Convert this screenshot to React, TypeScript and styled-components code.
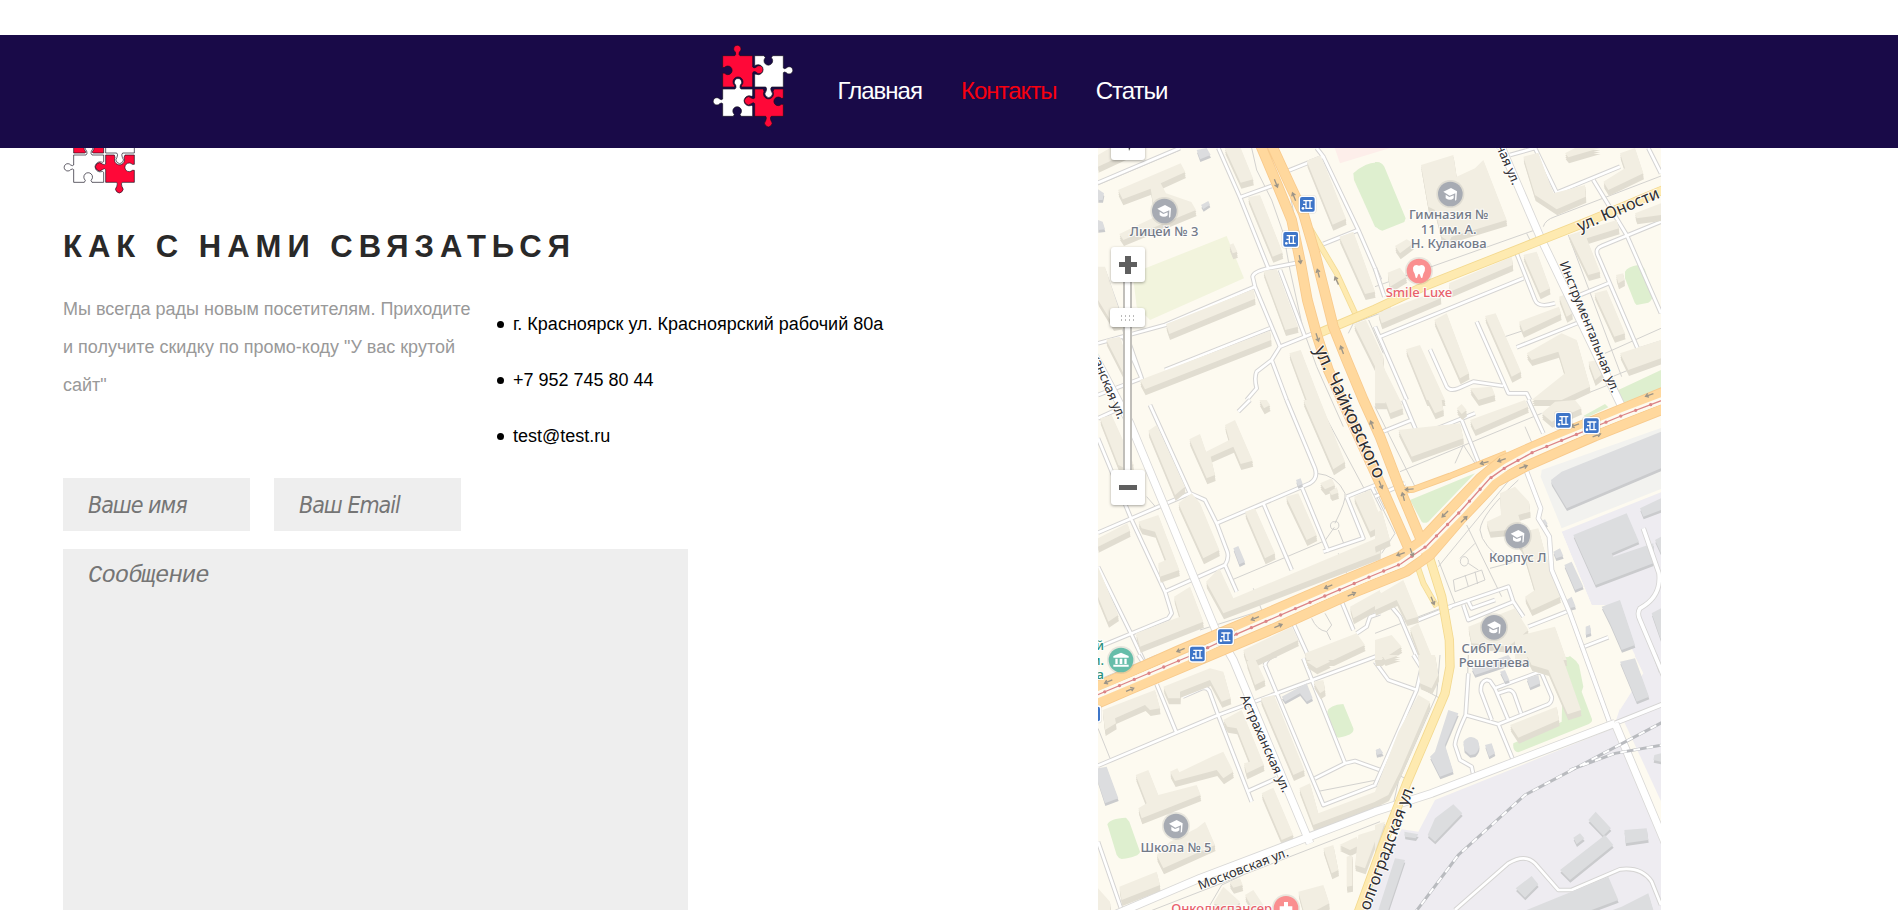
import React, { useState } from 'react';
import styled, { createGlobalStyle } from 'styled-components';

const GlobalStyle = createGlobalStyle`
  *, *::before, *::after { box-sizing: border-box; }
  body {
    margin: 0;
    background: #fff;
    font-family: Arial, "Liberation Sans", sans-serif;
  }
`;

const Page = styled.div`
  height: 100vh;
  overflow: hidden;
`;

const Header = styled.header`
  position: fixed;
  top: 35px;
  left: 0;
  right: 0;
  z-index: 10;
  height: 113px;
  display: flex;
  justify-content: center;
  gap: 44px;
  padding: 9px 19px 0 0;
  background: #190a48;
`;

const Nav = styled.nav`
  display: flex;
  align-items: center;
  gap: 39px;
  height: 94px;
`;

const NavLink = styled.a<{ $active?: boolean }>`
  font-size: 24px;
  line-height: 28px;
  letter-spacing: -1px;
  text-decoration: none;
  color: ${(p) => (p.$active ? '#f8000f' : '#fff')};
`;

const Main = styled.main`
  display: grid;
  grid-template-columns: 1035fr 563fr;
  padding: 110px 237px 0 63px;
`;

const Info = styled.section`
  display: flex;
  flex-direction: column;
  align-items: flex-start;
`;

const Title = styled.h1`
  margin: 34px 0 0;
  font-size: 31px;
  line-height: 38px;
  letter-spacing: 6px;
  text-transform: uppercase;
  color: #292929;
`;

const Contacts = styled.div`
  display: flex;
  gap: 22px;
  margin-top: 24px;
`;

const Lead = styled.p`
  width: 412px;
  margin: 0;
  font-size: 18px;
  line-height: 38px;
  color: #999;
`;

const ContactList = styled.ul`
  display: flex;
  flex-direction: column;
  gap: 18px;
  margin: 0;
  padding: 15px 0 0;
  list-style: none;
  font-size: 18px;
  line-height: 38px;
  color: #000;
`;

const ContactItem = styled.li`
  display: flex;
  align-items: center;
  gap: 9px;
  &::before {
    content: "";
    width: 7px;
    height: 7px;
    border-radius: 50%;
    background: #000;
  }
`;

const Form = styled.form`
  display: flex;
  flex-direction: column;
  gap: 18px;
  width: 625px;
  margin-top: 23px;
`;

const FieldRow = styled.div`
  display: flex;
  gap: 24px;
`;

const Field = styled.input`
  width: 187px;
  height: 53px;
  padding: 0 25px;
  border: 0;
  border-radius: 0;
  outline: 0;
  background: #eee;
  font-family: "DejaVu Sans Condensed", "DejaVu Sans", sans-serif;
  font-size: 23px;
  font-style: italic;
  letter-spacing: -1px;
  &::placeholder { color: #757575; opacity: 1; }
`;

const Message = styled.textarea`
  width: 100%;
  height: 500px;
  padding: 13px 25px;
  border: 0;
  border-radius: 0;
  outline: 0;
  resize: none;
  background: #eee;
  font-family: "Liberation Mono", "Courier New", monospace;
  font-size: 24px;
  line-height: 27px;
  font-style: italic;
  letter-spacing: -1px;
  &::placeholder { color: #757575; opacity: 1; }
`;

const MapPanel = styled.section`
  position: relative;
  height: 840px;
  padding-top: 34px;
  overflow: hidden;
`;

const MapCanvas = styled.svg`
  display: block;
  width: 100%;
  height: 766px;
  font-family: "Noto Sans", sans-serif;
`;

const Controls = styled.div`
  position: absolute;
  top: 15px;
  left: 12px;
  display: flex;
  flex-direction: column;
  align-items: center;
`;

const MapButton = styled.button`
  position: relative;
  z-index: 1;
  display: flex;
  align-items: center;
  justify-content: center;
  width: 34px;
  height: 35px;
  padding: 0;
  border: 0;
  border-radius: 3px;
  background: #fff;
  box-shadow: 0 1px 3px rgba(0, 0, 0, 0.35);
`;

const LocateButton = styled(MapButton)`
  margin-bottom: 87px;
`;

const ZoomRange = styled.input`
  appearance: none;
  writing-mode: vertical-lr;
  direction: rtl;
  width: 35px;
  height: 188px;
  margin: 0;
  background: transparent;
  &::-webkit-slider-runnable-track {
    width: 9px;
    border: 2px solid #c1bfba;
    border-width: 0 2px;
    background: #fff;
  }
  &::-webkit-slider-thumb {
    appearance: none;
    width: 35px;
    height: 19px;
    margin-left: -15px;
    border-radius: 3px;
    background: #fff;
    box-shadow: 0 1px 3px rgba(0, 0, 0, 0.35);
  }
`;

const ZoomTrack = styled.div`
  position: relative;
  display: flex;
`;

const Grip = styled.svg`
  position: absolute;
  top: 33px;
  left: 11px;
  pointer-events: none;
`;

function Logo() {
  return (
    <svg width="82" height="84" viewBox="35 27 246 252" role="img" aria-label="Логотип">
      <g stroke="#15101f" strokeWidth="2" strokeLinejoin="round">
        <path fill="#ff0838" d="M67 62H103Q108 60 105 51A11 11 0 1 1 117 51Q114 60 119 62H157V96Q160 101 167 97A12 12 0 1 1 167 111Q160 107 157 113V156H126Q120 154 124 151A15 15 0 1 0 102 151Q106 154 100 156H67V114L73 115A13 13 0 1 0 73 97L67 98Z" />
        <path fill="#fff" d="M163 62H191L195 68A13 13 0 1 0 213 68L217 62H249V99Q252 103 258 99A11 11 0 1 1 258 113Q252 109 249 113V156H214Q209 160 213 169A11 11 0 1 1 197 169Q201 160 196 156H163V117L168 118A15 15 0 1 0 168 90L163 92Z" />
        <path fill="#fff" d="M67 162H104Q109 158 106 150A11 11 0 1 1 120 150Q117 158 122 162H157V182L153 184A15 15 0 1 0 153 211L157 214V244H122L119 238A13 13 0 1 0 102 238L99 244H67V206Q64 202 58 206A11 11 0 1 1 58 192Q64 196 67 192Z" />
        <path fill="#ff0838" d="M163 162H189L191 170A15 15 0 1 0 218 170L221 162H249V190L243 190A13 13 0 1 0 243 208L249 208V244H213Q208 247 212 257A11 11 0 1 1 196 257Q200 247 196 244H163V206Q160 200 153 206A12 12 0 1 1 153 189Q160 193 163 189Z" />
      </g>
    </svg>
  );
}

/* The map is drawn in tiles; every tile has its own origin and lists its blocks. */
type Tile = {
  x: number;
  y: number;
  greens: string[];
  paths: string[];
  roads: string[];
  buildings: string[];
  grey: string[];
};

const tiles: Tile[] = [
  {
    x: 0,
    y: 0,
    greens: ['M870 68Q830 62 790 100L792 120L855 260L870 268Z'],
    paths: ['M485 24L500 90L545 180L580 280L600 390L640 570L680 680L760 860', 'M615 240L600 160L560 24', 'M0 145L270 30', 'M870 520L790 550L775 580', 'M836 540L880 640'],
    roads: ['M24 128L270 24', 'M385 24L450 172L535 385', 'M450 172L545 138', 'M595 92L700 50L680 24', 'M700 50L805 270L870 420', 'M805 270L700 312', 'M535 385L625 368', 'M535 385Q490 395 488 410L495 440L570 620L545 660L500 695Q492 712 500 745L470 780', 'M495 440L225 555L24 610', 'M40 390L155 715L24 765', 'M155 715L100 590', 'M545 660L590 780', 'M570 620L670 580', 'M570 390L645 590', 'M540 565L225 690'],
    buildings: ['M404 24L452 24L490 118L452 128Z', 'M84 150L272 70L286 96L212 130L228 160L304 186L318 210L100 300L88 282L196 230L182 146L98 178Z', 'M474 172L510 165L578 338L548 350Z', 'M650 62L692 46L768 236L728 254Z', 'M748 290L790 275L855 455L825 462Z', 'M520 392L560 388L624 560L586 570Z', 'M228 552L490 448L495 476L238 582Z', 'M150 720L540 572L543 600L165 748Z', 'M24 380L45 380L100 550L70 555L24 480Z', 'M48 598L90 590L122 690L100 700Z', 'M792 552L828 540L880 650L880 730Z', 'M598 640L632 630L690 780L650 780Z', 'M24 45L60 24L145 24L24 80Z', 'M418 315L430 310L442 335L428 340Z', 'M866 500L900 490L900 530Z'],
    grey: ['M320 30L350 24L362 45L330 58Z', 'M333 195L355 183L360 194L340 207Z', 'M24 148L42 160L38 180L24 180Z', 'M24 240L38 245L45 268L24 270Z'],
  },
  {
    x: 855,
    y: 0,
    greens: ['M0 66Q20 64 28 80L92 235L88 246L22 272Q10 270 0 255Z', 'M750 395Q758 380 790 375Q808 378 812 395L833 460Q835 480 820 488L785 495Q778 490 775 478L750 415Z', 'M730 750L858 690L858 745L740 795Z'],
    paths: ['M0 440L480 270', 'M505 260Q510 240 540 230L858 108', 'M455 280L470 310', 'M580 285L740 710', 'M690 640L858 565', 'M390 590L450 570', 'M700 715L858 650', 'M560 790L700 735'],
    roads: ['M405 45L480 24L545 158L735 80', 'M655 120L755 285L858 520', 'M820 24L858 100', 'M858 245L680 318Q660 325 668 345L790 630L858 608', 'M700 430L615 465', 'M425 340L480 480Q490 505 540 490', 'M15 590L445 415', 'M0 560L95 780', 'M0 385L28 470', 'M165 628L215 740Q225 755 250 745L295 725L385 738', 'M305 545L400 760L455 760L465 780', 'M425 622L610 548'],
    buildings: ['M138 75L235 45L245 110L300 85L325 60L395 240L230 290L222 305L200 290L180 210L160 200Z', 'M445 50L490 38L535 160L630 135L632 170L545 208L480 165Z', 'M570 40L600 24L675 24L580 52Z', 'M735 40L780 24L805 100L700 150L685 125L750 85Z', 'M582 285L725 240L732 265L635 295L675 395L640 405Z', 'M445 345L485 335L525 445L495 460Z', 'M222 430L410 350L413 375L225 455Z', 'M10 518L195 450L197 475L20 550Z', 'M178 540L215 520L282 700L255 715Z', 'M330 528L362 520L438 695L410 710Z', 'M93 628L135 615L210 780L155 780Z', 'M0 600L30 690L80 790L0 790Z', 'M432 545L552 500L558 522L445 575Z', 'M455 640L560 580L605 600L645 740L560 780L470 780L570 700L550 635L470 660Z', 'M658 460L695 450L750 580L718 590Z', 'M735 640L858 600L858 655L760 690Z', 'M780 220L858 190L858 225L785 235Z', 'M60 318L95 298L115 310L75 340Z', 'M38 398L75 383L95 410L45 440Z', 'M552 470L575 462L592 520L575 530Z', 'M640 665L670 660L685 700L660 720Z', 'M723 405L745 400L748 420L730 430Z', 'M285 745L350 740L360 765L310 780Z'],
    grey: [],
  },
  {
    x: 0,
    y: 780,
    greens: [],
    paths: ['M680 0L830 280', 'M680 220Q740 225 765 280Q770 300 735 370', 'M425 540L705 422L733 382', 'M733 365A10 12 0 1 0 735 388A10 12 0 1 0 733 365', 'M745 390L765 440', 'M665 655Q680 690 710 695L725 675L705 640', 'M710 695L722 720', 'M170 290L205 330', 'M490 565L515 630', 'M745 460L770 520', 'M330 690L520 630L870 490'],
    roads: ['M180 15L300 280L24 398', 'M24 115L125 360L225 575L245 640L235 655L24 742', 'M225 575L405 495', 'M300 280L345 300L380 370L412 455Q418 475 405 495L440 575', 'M380 370L660 250Q685 235 675 205L590 0', 'M520 310L605 510', 'M635 260L715 455', 'M770 290L870 250', 'M770 290L820 415L700 455', 'M445 35L480 0', 'M24 500L125 705L160 780', 'M610 670L660 780', 'M755 605L790 690', 'M870 640L840 650L830 680L800 700', 'M24 55L100 20', 'M845 260L880 330'],
    buildings: ['M30 55L65 45L130 190L115 210L85 195Z', 'M640 0L690 0L765 185L730 208Z', 'M175 92L200 75L285 260L255 285Z', 'M298 118L330 102L348 155L418 120L405 75L435 60L488 182L452 192L430 140L362 170L375 225L350 235Z', 'M265 310L305 280L330 310L388 450L340 475Z', 'M465 335L495 325L555 460L525 475Z', 'M588 290L625 280L680 405L650 420Z', 'M24 415L112 370L120 392L24 440Z', 'M145 365L205 345L268 510L210 530L205 490L228 480L195 395L155 385Z', 'M24 500L85 645L55 665L24 590Z', 'M252 590L300 560L340 665L150 740L138 700L270 650Z', 'M348 545L388 505L430 595L870 410L870 460L400 640Z', 'M690 250L725 235L735 255L705 268Z', 'M718 275L740 262L745 278L725 285Z', 'M792 290L840 270L870 350L870 380L840 395Z', 'M460 750L605 680L625 720L500 780L470 780Z', 'M780 620L870 570L870 610L790 655Z', 'M645 760L800 700L825 735L730 780L650 780Z', 'M508 0L530 0L540 15L522 25Z'],
    grey: ['M618 240L632 235L638 252L624 258Z', 'M430 445L445 438L465 485L448 493Z'],
  },
  {
    x: 855,
    y: 780,
    greens: ['M105 300L300 220L160 365Q148 372 140 365Z', 'M625 48L690 12L700 22L640 50Z', 'M570 776L585 768L605 785L575 790Z'],
    paths: ['M75 215L500 40', 'M0 20L110 240L120 260', 'M240 190L265 135L300 190', 'M415 225L190 500', 'M275 375L380 590', 'M430 240Q320 340 315 390Q320 440 400 490', 'M190 480L240 610', 'M235 540L320 510L330 540L240 575Z', 'M270 525L280 560M300 515L308 552', 'M267 470A12 14 0 1 0 269 498A12 14 0 1 0 267 470', 'M280 490L310 510M255 475L300 430', 'M345 505L420 485', 'M0 700L210 620', 'M0 280L60 400L20 460', 'M450 80L480 150'],
    roads: ['M15 98L110 60L85 0', 'M110 60L125 95Q135 105 155 98L300 40', 'M260 60L310 185', 'M460 0L505 100', 'M210 625L400 560L415 605L445 650', 'M280 605L290 625L360 600', 'M265 615L280 660L415 605', 'M460 680L575 635', 'M615 745L700 712', 'M0 625L50 620L75 650L130 780', 'M130 660L230 620', 'M90 250L0 290'],
    buildings: ['M70 90L255 70L265 115L110 170Z', 'M30 0L72 0L84 25L45 40Z', 'M160 0L200 0L205 30L180 40Z', 'M285 60L450 0L460 20L300 90Z', 'M245 25L260 12L275 30L260 42Z', 'M500 40L540 5L600 0L620 25L530 65Z', 'M375 280L420 260L462 305L465 335L430 345L445 395L490 385L505 440L530 520L556 590L470 630L450 590L480 570L450 470L440 440L400 390L345 395L335 365L378 345Z', 'M0 590L85 540L130 650L95 660L65 600L0 630Z', 'M280 680L420 625L460 690L400 740L290 730Z', 'M420 710L540 680L575 780L420 780Z', 'M0 720L50 705L80 740L20 780L0 780Z', 'M105 685L130 670L175 780L140 780Z', 'M0 340L20 330L45 420L0 440Z'],
    grey: ['M528 240L560 215L858 95L858 205L575 325L530 250Z', 'M595 405L755 340L792 425L710 460L715 470L835 430L835 490L662 555Z', 'M795 325L858 295L858 330L805 350Z', 'M568 495L590 485L625 560L600 570Z', 'M680 620L735 600L780 735L740 750L705 670Z', 'M535 455L555 445L565 468L543 475Z', 'M495 365L510 358L518 372L503 380Z', 'M575 600L590 590L602 620L582 625Z', 'M632 680L645 675L648 700L632 705Z', 'M830 640L858 625L858 720Z', 'M840 420L858 410L858 460Z'],
  },
  {
    x: 0,
    y: 1545,
    greens: ['M52 508Q60 490 108 488L118 500L150 590Q148 605 95 612Q85 610 80 600Z', 'M712 170Q718 150 760 147L790 220Q795 240 745 248Q735 245 730 235Z'],
    paths: ['M24 220L60 310', 'M200 0L24 75', 'M680 410L860 375L870 350', 'M360 750L395 690L460 660', 'M150 780L870 500'],
    roads: ['M24 332L380 182L870 0', 'M200 88L258 230', 'M278 125L335 100Q350 95 358 108L385 182L485 440', 'M475 408L560 370', 'M525 30Q530 5 560 0', 'M525 30L700 450L870 385', 'M640 10L765 325L675 370', 'M765 325L795 318L870 345', 'M145 0L158 20', 'M24 560L100 780'],
    buildings: ['M38 165L195 105L210 160L180 165L165 150L75 190L78 205L45 225Z', 'M220 95L360 40L400 50L422 130L395 140L360 75L270 110L270 130L235 130Z', 'M400 195L455 165L522 330L470 355L462 325L480 320L440 220L412 215Z', 'M240 350L262 340L268 352L365 305L400 290L430 350L400 370L380 345L255 378Z', 'M137 360L175 345L205 420L320 390L332 420L155 490L145 460L170 445Z', 'M512 130L552 120L643 345L610 360Z', 'M515 415L550 398L610 540L575 555Z', 'M628 400L660 385L685 475L870 405L870 435L670 510Z', 'M88 695L200 650L210 690L95 735Z', 'M200 600L240 560L320 520L345 500L375 570L220 640Z', 'M470 20L490 0L525 75L495 90Z', 'M24 700L60 740L60 765L24 765Z', 'M650 20L700 0L720 20L680 40Z', 'M700 580L730 570L745 645L725 655Z', 'M770 605L787 600L787 692L770 695Z', 'M805 540L870 520L825 640L795 630Z', 'M370 745L400 695L450 740L430 765Z', 'M465 720L490 705L520 750L490 765Z', 'M625 710L700 690L718 745L680 765L640 765Z', 'M748 570L800 545L810 570L780 585Z', 'M670 80L700 75L705 105L690 115Z', 'M418 680L450 670L458 690L430 698Z'],
    grey: ['M24 340L50 335L85 430L45 445L24 380Z', 'M575 125L650 85L668 130L650 140L630 115L585 140Z', 'M858 285L870 280L870 300Z'],
  },
  {
    x: 855,
    y: 1545,
    greens: ['M565 5Q600 5 612 30L625 95L620 110L650 190Q655 200 640 208L430 292Q412 290 415 265L560 200Z'],
    paths: ['M195 0L185 120L70 380L30 560', 'M140 100L195 130', 'M30 340L90 370', 'M280 0L278 60'],
    roads: ['M0 20L40 75L125 105L0 390', 'M115 0L140 40L125 105', 'M280 55L272 180Q240 250 240 270L255 315L290 335L295 360', 'M272 180L370 208L412 310', 'M350 195L318 110Q315 80 335 75L345 78L360 100L400 195', 'M360 100L490 52L500 55L530 125Q532 140 520 148L370 208', 'M370 115L400 105Q412 105 418 118L438 175', 'M840 0L858 50', 'M240 765L400 625Q450 595 480 625L550 705L590 705L735 643Q800 635 830 680L858 750'],
    buildings: ['M455 0L560 0L618 165L578 178L520 45L470 30Z', 'M405 210L545 155L552 195L430 248Z', 'M130 0L180 0L190 60L170 100L135 85Z', 'M70 230L130 120L165 140L75 350L40 420L0 440L0 410Z', 'M0 510L30 500L0 590Z', 'M20 0L75 0L30 15Z'],
    grey: ['M220 165L250 175L210 270L235 350L195 365L165 305L180 290Z', 'M265 260Q285 235 308 255Q320 280 300 298L285 300L268 285Z', 'M330 270L350 265L360 295L342 305Z', 'M290 40L400 0L415 22L300 60Z', 'M735 20L780 10L822 125L785 140Z', 'M158 540L180 490L235 448L262 475L180 560Z', 'M88 530L130 538L122 550L90 545Z', 'M60 610L90 615L40 765L10 765Z', 'M555 645L690 540L715 570L585 675Z', 'M640 495L662 470L708 520L685 542Z', 'M595 548L615 535L628 550L605 568Z', 'M748 525L815 520L820 555L752 565Z', 'M422 700L470 663L490 688L450 728Z', 'M455 765L700 665L730 735L650 765Z', 'M740 755L820 715L835 765L700 770Z', 'M838 300L858 295L858 320L835 315Z', 'M2 285L15 280L25 295L5 300Z', 'M375 50L390 45L403 75L390 80Z', 'M455 70L490 60L495 85L465 98Z'],
  },
];

const upperLane = 'M0 1648L55 1625L270 1530L495 1435L715 1340L855 1282L930 1250L985 1210L1065 1125L1170 1015L1235 962L1340 915L1455 865L1560 822L1730 752';
const lowerLane = 'M0 1700L120 1648L565 1460L785 1360L855 1332L950 1294L1020 1245L1115 1135L1220 1025L1305 980L1515 888L1730 803';
const tram = 'M0 1674L300 1548L445 1480L625 1402L845 1308L932 1272L1010 1218L1110 1115L1200 1015L1250 980L1330 936L1467 880L1600 825L1730 776';
const streetLeft = 'M505 0L560 130L605 240L632 370L652 480L682 590L715 690L760 790L870 1030L965 1245';
const streetRight = 'M538 0L600 135L640 220L675 340L700 440L730 560L770 660L820 780L870 890L935 1060L1010 1240';
const link = 'M930 1052L970 1048L1080 1008L1250 940';
const orangeRoads = [upperLane, lowerLane, streetLeft, streetRight];
const yellowRoads = ['M690 578L855 508L1000 440L1500 242L1730 145', 'M1020 1258L1055 1370L1078 1500L1080 1580L1065 1660L1010 1790L950 1930L880 2110L800 2330'];
const yellowLinks = ['M660 265L740 400L800 530', 'M978 1265L1000 1330L1040 1400'];
const whiteRoads = ['M10 640L120 850L220 1090L375 1465L430 1560L660 2110', 'M60 2330L330 2215L855 2015L1025 1960L1575 1750', 'M1225 0L1350 290L1600 810', 'M1575 1750L1730 2120'];
const sideRoads = ['M1310 995L1352 1105L1345 1135L1378 1190L1385 1290L1440 1420L1560 1750', 'M1575 1750L1730 1688', 'M1660 1165L1707 1300Q1715 1370 1650 1405Q1640 1420 1650 1440L1730 1630'];
const rails = ['M970 2325L1105 2145L1305 1965L1455 1885L1730 1740', 'M1440 1890L1575 1840L1730 1813'];

const arrows: [number, number, number][] = [
  [558, 130, 68], [612, 170, -112], [630, 358, 80], [685, 400, -105], [740, 422, -115],
  [682, 592, 72], [756, 630, -110], [846, 855, -110], [715, 1340, 157], [785, 1363, -23],
  [495, 1435, 157], [565, 1458, -23], [272, 1530, 157], [120, 1649, -23], [55, 1625, 157],
  [1065, 1122, 135], [1122, 1138, -45], [1235, 960, 160], [1300, 981, -20], [1183, 968, 165],
  [958, 1048, 175], [940, 1070, -105], [872, 1034, 68], [1028, 1382, 68], [932, 1242, 160],
  [965, 1237, 70], [1520, 886, -20], [1455, 856, 160], [1678, 765, 160],
];

const stops: [number, number][] = [
  [652, 193], [602, 298], [406, 1490], [322, 1542], [1420, 841], [1504, 857], [8, 1722],
];

const schools: [number, number][] = [[223, 213], [1081, 162], [1283, 1188], [1212, 1462], [258, 2058]];

function Tiles({ kind }: { kind: 'ground' | 'blocks' }) {
  return (
    <>
      {tiles.map((t) => (
        <g key={`${t.x}-${t.y}`} transform={`translate(${t.x} ${t.y})`}>
          {kind === 'ground' && (
            <>
              <path d={t.greens.join('')} fill="#deefcf" />
              <path d={t.paths.join('')} fill="none" stroke="#d3d2cf" strokeWidth="3" />
              <path d={t.roads.join('')} fill="none" stroke="#d5d4d3" strokeWidth="14" strokeLinejoin="round" />
              <path d={t.roads.join('')} fill="none" stroke="#fff" strokeWidth="8" strokeLinejoin="round" />
            </>
          )}
          {kind === 'blocks' && (
            <>
              {[18, 12, 6].map((d) => (
                <g key={d} transform={`translate(${d > 12 ? 2 : 1} ${d})`}>
                  <path d={t.buildings.join('')} fill="#e1ddd1" />
                </g>
              ))}
              <path d={t.buildings.join('')} fill="#f2eee2" />
              <path d={t.grey.join('')} fill="#cacbcd" transform="translate(1 8)" />
              <path d={t.grey.join('')} fill="#dcdddf" />
            </>
          )}
        </g>
      ))}
    </>
  );
}

function Roads({ list, width, edge, fill }: { list: string[]; width: number; edge: string; fill: string }) {
  const d = list.join('');
  return (
    <g fill="none" strokeLinejoin="round">
      <path d={d} stroke={edge} strokeWidth={width + 5} />
      <path d={d} stroke={fill} strokeWidth={width} />
    </g>
  );
}

function Pin({ x, y, color, children }: { x: number; y: number; color: string; children: React.ReactNode }) {
  return (
    <g transform={`translate(${x} ${y})`}>
      <circle r="42" fill="#8a8a8a" opacity="0.18" />
      <circle r="37" fill={color} />
      {children}
    </g>
  );
}

function StreetName({ x, y, angle, size, children, end }: { x: number; y: number; angle: number; size: number; children: string; end?: boolean }) {
  return (
    <text
      transform={`translate(${x} ${y}) rotate(${angle})`}
      fontSize={size}
      fill="#2f2f33"
      stroke="#fff"
      strokeWidth="6"
      strokeOpacity="0.8"
      paintOrder="stroke"
      textAnchor={end ? 'end' : 'start'}
    >
      {children}
    </text>
  );
}

function PlaceName({ x, y, color = '#737a88', lines, size = 39, anchor = 'middle' }: { x: number; y: number; color?: string; lines: string[]; size?: number; anchor?: 'middle' | 'end' }) {
  return (
    <g fontSize={size} fontWeight="500" fill={color} stroke="#fff" strokeWidth="6" strokeOpacity="0.8" paintOrder="stroke" textAnchor={anchor}>
      {lines.map((line, i) => (
        <text key={line} x={x} y={y + i * 44}>{line}</text>
      ))}
    </g>
  );
}

function CityMap() {
  return (
    <MapCanvas viewBox="24 12 1689 2298" preserveAspectRatio="xMinYMin slice" role="img" aria-label="Карта проезда">
      <rect width="1800" height="2400" fill="#fdfaf0" />
      <path d="M730 12H1040L900 24L750 70Z" fill="#fdeeea" />
      <path d="M128 400L410 288L462 415L180 540L140 500Z" fill="#f2f4dd" />
      <path d="M1355 990L1730 858V1040L1415 1165L1352 1010Z" fill="#f2f2ef" />
      <path d="M1415 1175L1730 1050V1700L1590 1710L1635 1545L1560 1395L1505 1395Z" fill="#eeecf1" />
      <path d="M1035 1980L1570 1765L1590 1705L1730 1650V2330H790L935 2068L985 2075Z" fill="#eeecf1" />
      <path d="M1355 1200L1415 1175L1505 1395L1560 1395L1660 1600L1590 1710L1460 1430Z" fill="#fdfaf0" />
      <path d="M1600 1740L1730 2020V2100L1570 1760Z" fill="#fdfaf0" />
      <Tiles kind="ground" />
      <Tiles kind="blocks" />
      <Roads list={sideRoads} width={11} edge="#d5d4d3" fill="#fff" />
      <Roads list={whiteRoads} width={21} edge="#d9d8d6" fill="#fff" />
      <Roads list={yellowLinks} width={13} edge="#f3dc97" fill="#feeab0" />
      <Roads list={yellowRoads} width={23} edge="#f3d98f" fill="#feeab0" />
      <Roads list={[link]} width={15} edge="#f8ca8c" fill="#ffd89d" />
      <Roads list={orangeRoads} width={27} edge="#f8ca8c" fill="#ffd89d" />
      <g fill="none">
        <path d={tram} stroke="#fdfaf0" strokeWidth="20" />
        <path d={tram} stroke="#dc8486" strokeWidth="4" />
        <path d={tram} stroke="#dc8486" strokeWidth="10" strokeLinecap="round" strokeDasharray="0 48" />
        <path d={rails.join('')} stroke="#b9bbbf" strokeWidth="9" />
        <path d={rails.join('')} stroke="#fff" strokeWidth="6" strokeDasharray="20 20" />
      </g>
      {arrows.map(([x, y, a]) => (
        <path key={`${x}-${y}`} transform={`translate(${x} ${y}) rotate(${a})`} d="M-13 0H12M3 -6L12 0L3 6" fill="none" stroke="#9c9588" strokeWidth="4" />
      ))}

      <StreetName x={672} y={628} angle={65} size={56}>ул. Чайковского</StreetName>
      <StreetName x={450} y={1672} angle={66} size={39}>Астраханская ул.</StreetName>
      <StreetName x={330} y={2250} angle={-21} size={39}>Московская ул.</StreetName>
      <StreetName x={1408} y={370} angle={68} size={39}>Инструментальная ул.</StreetName>
      <StreetName x={1268} y={138} angle={67} size={39} end>ная ул.</StreetName>
      <StreetName x={1470} y={275} angle={-23} size={49}>ул. Юности</StreetName>
      <StreetName x={84} y={840} angle={67} size={39} end>ханская ул.</StreetName>
      <StreetName x={974} y={1940} angle={-70} size={49} end>олгоградская ул.</StreetName>

      {schools.map(([x, y]) => (
        <Pin key={`${x}-${y}`} x={x} y={y} color="#a7abb3">
          <path d="M-21 -7L2 -18L20 -8L18 18L14 20L15 -2L-2 5ZM-14 2L-3 9L10 4V13Q0 22 -14 13Z" fill="#fff" />
        </Pin>
      ))}
      <Pin x={987} y={393} color="#fa8f90">
        <path d="M-18 -10Q-15 -22 0 -16Q15 -22 18 -10Q19 0 13 8L10 20Q6 24 4 14Q0 2 -4 14Q-6 24 -10 20L-13 8Q-19 0 -18 -10Z" fill="#fff" />
      </Pin>
      <Pin x={588} y={2305} color="#fa8f90">
        <path d="M-6 -19H6V-6H19V6H6V19H-6V6H-19V-6H-6Z" fill="#fff" />
      </Pin>
      <Pin x={93} y={1560} color="#66bda9">
        <path d="M0 -22L23 -12V-7H-23V-12ZM-17 -4H-10V12H-17ZM-4 -4H4V12H-4ZM10 -4H17V12H10ZM-23 14H23V20H-23Z" fill="#fff" />
      </Pin>

      {stops.map(([x, y]) => (
        <g key={`${x}-${y}`} transform={`translate(${x} ${y})`}>
          <rect x="-28" y="-28" width="56" height="56" rx="11" fill="#777" opacity="0.14" />
          <rect x="-26" y="-26" width="52" height="52" rx="10" fill="#fff" />
          <rect x="-22" y="-22" width="44" height="44" rx="6" fill="#3e75c8" />
          <path d="M-12 -11H15M8 -11V12M-4 -11V0H-13M-4 0V12H15" fill="none" stroke="#fff" strokeWidth="4" />
          <circle cx="-13" cy="12" r="4" fill="#fff" />
        </g>
      ))}

      <PlaceName x={222} y={288} lines={['Лицей № 3']} />
      <PlaceName x={1076} y={237} lines={['Гимназия №', '11 им. А.', 'Н. Кулакова']} />
      <PlaceName x={987} y={472} color="#e8616c" lines={['Smile Luxe']} />
      <PlaceName x={1283} y={1266} lines={['Корпус Л']} />
      <PlaceName x={1212} y={1538} lines={['СибГУ им.', 'Решетнева']} />
      <PlaceName x={258} y={2136} lines={['Школа № 5']} />
      <PlaceName x={395} y={2318} color="#e8616c" lines={['Онкодиспансер']} />
      <PlaceName x={42} y={1530} color="#2a8f79" anchor="end" lines={['й', 'м.', 'а']} />
    </MapCanvas>
  );
}

export default function App() {
  const [zoom, setZoom] = useState(11);
  return (
    <Page>
      <GlobalStyle />
      <Header>
        <Logo />
        <Nav>
          <NavLink href="#main">Главная</NavLink>
          <NavLink href="#contacts" $active>Контакты</NavLink>
          <NavLink href="#articles">Статьи</NavLink>
        </Nav>
      </Header>
      <Main>
        <Info>
          <Logo />
          <Title>Как с нами связаться</Title>
          <Contacts>
            <Lead>Мы всегда рады новым посетителям. Приходите и получите скидку по промо-коду "У вас крутой сайт"</Lead>
            <ContactList>
              <ContactItem>г. Красноярск ул. Красноярский рабочий 80а</ContactItem>
              <ContactItem>+7 952 745 80 44</ContactItem>
              <ContactItem>test@test.ru</ContactItem>
            </ContactList>
          </Contacts>
          <Form>
            <FieldRow>
              <Field type="text" aria-label="Ваше имя" placeholder="Ваше имя" />
              <Field type="email" aria-label="Ваш Email" placeholder="Ваш Email" />
            </FieldRow>
            <Message aria-label="Сообщение" placeholder="Сообщение" />
          </Form>
        </Info>
        <MapPanel>
          <CityMap />
          <Controls>
            <LocateButton type="button" aria-label="Моё местоположение">
              <svg width="18" height="18" viewBox="0 0 18 18"><path d="M1 8L17 1L10 17L9 9Z" fill="#444" /></svg>
            </LocateButton>
            <MapButton type="button" aria-label="Приблизить" onClick={() => setZoom(Math.min(13, zoom + 1))}>
              <svg width="18" height="18" viewBox="0 0 18 18"><path d="M6 0H12V6H18V11H12V18H6V11H0V6H6Z" fill="#5f5f5f" /></svg>
            </MapButton>
            <ZoomTrack>
              <ZoomRange type="range" min={0} max={13} value={zoom} aria-label="Масштаб" onChange={(e) => setZoom(Number(e.target.value))} />
              <Grip width="14" height="6" viewBox="0 0 14 6">
                <path d="M0 1H14M0 5H14" stroke="#777" strokeWidth="1" strokeDasharray="1 3" />
              </Grip>
            </ZoomTrack>
            <MapButton type="button" aria-label="Отдалить" onClick={() => setZoom(Math.max(0, zoom - 1))}>
              <svg width="18" height="18" viewBox="0 0 18 18"><path d="M0 6H18V11H0Z" fill="#5f5f5f" /></svg>
            </MapButton>
          </Controls>
        </MapPanel>
      </Main>
    </Page>
  );
}
